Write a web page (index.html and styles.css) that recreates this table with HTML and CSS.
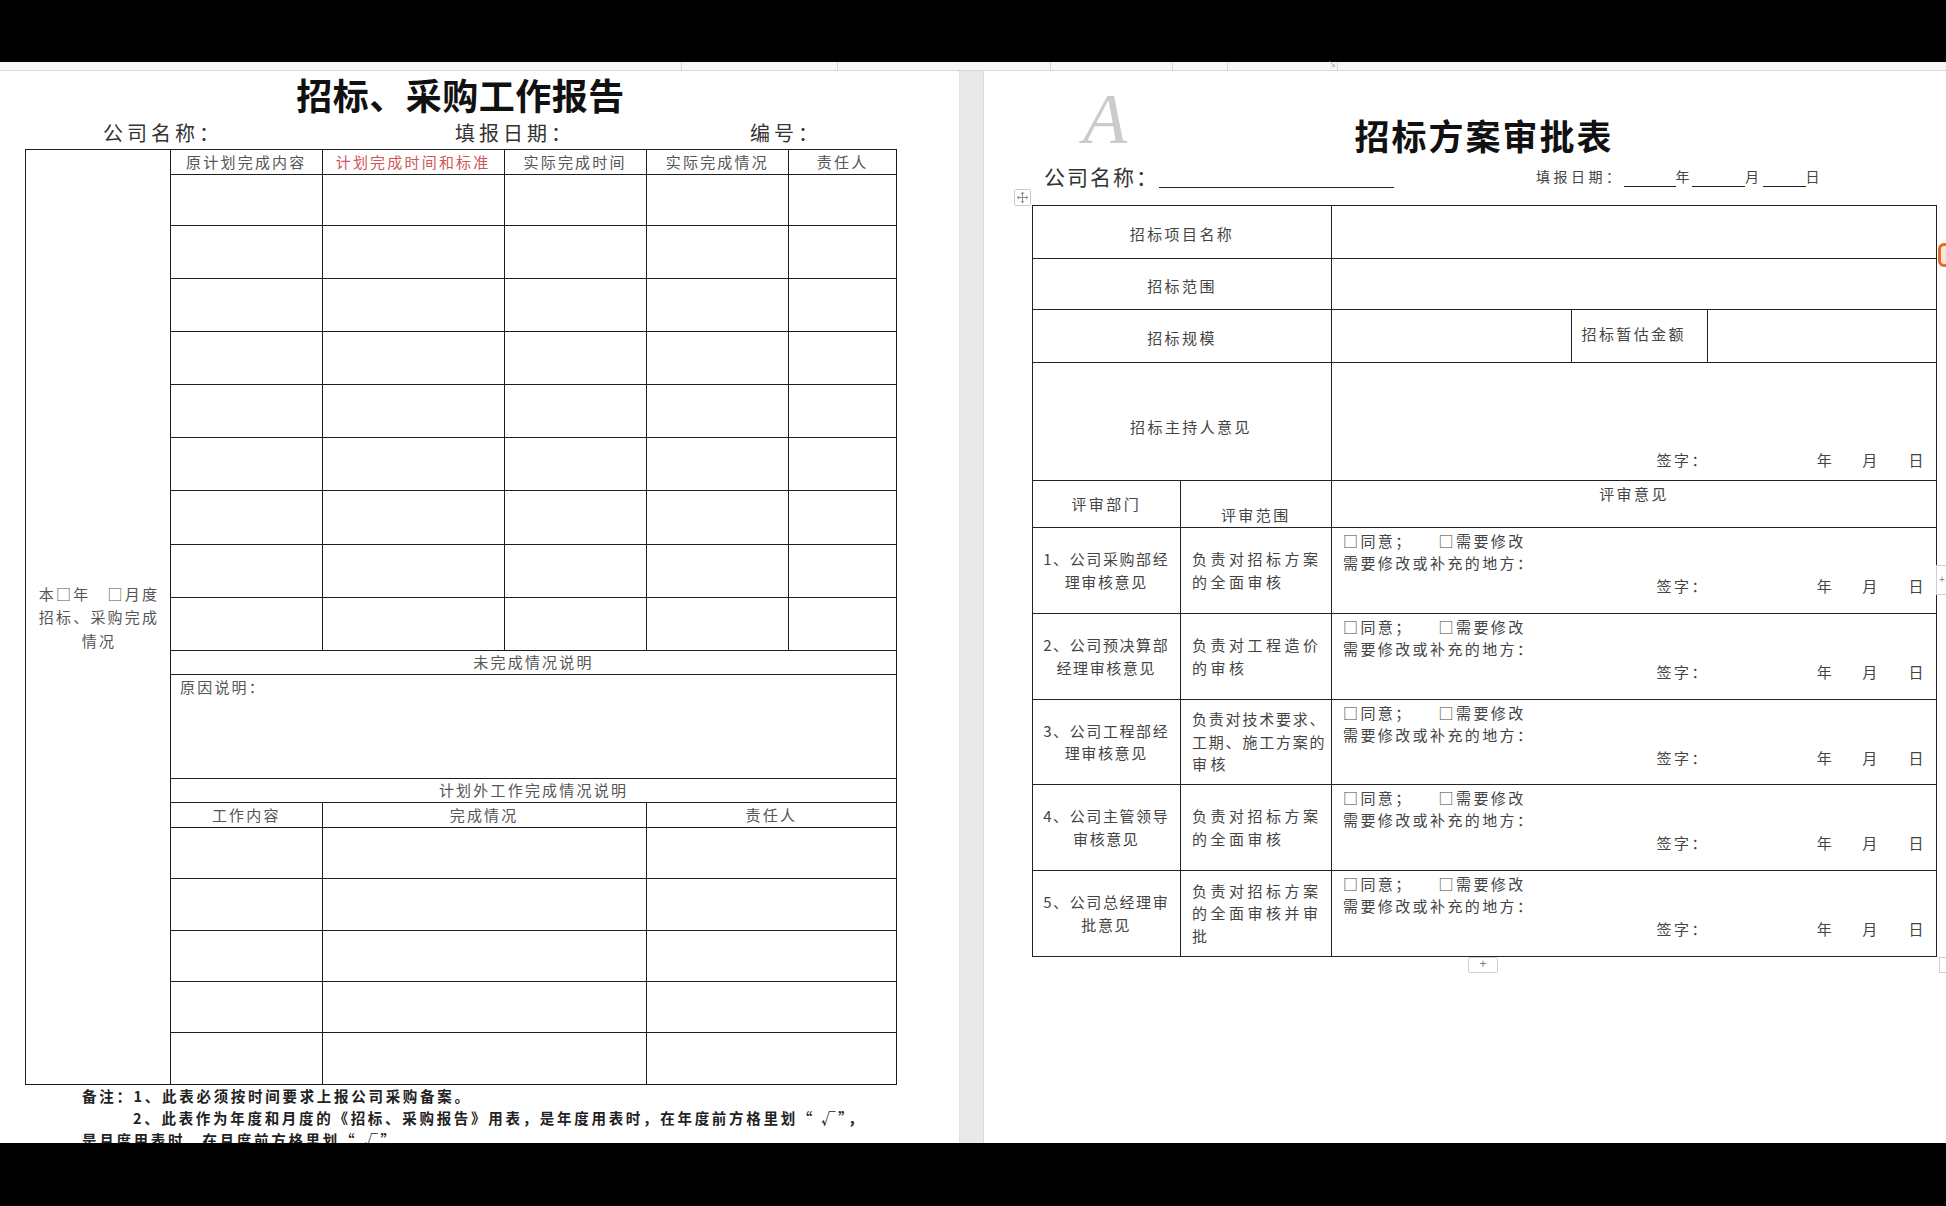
FILE: index.html
```html
<!DOCTYPE html>
<html lang="zh-CN">
<head>
<meta charset="utf-8">
<title>招标、采购工作报告 / 招标方案审批表</title>
<link rel="stylesheet" href="styles.css">
</head>
<body>
<div class="screen">
  <div class="bar-top"></div>
  <div class="ruler">
    <span class="tick k1"></span><span class="tick k2"></span><span class="tick k3"></span>
    <span class="tick k4"></span><span class="tick k5"></span><span class="tick k6"></span>
    <span class="ruler-mark">↘</span>
  </div>
  <div class="workspace">
    <section class="page page-left">
      <h1 class="doc-title">招标、采购工作报告</h1>
      <div class="meta-left">
        <span class="m1">公司名称：</span><span class="m2">填报日期：</span><span class="m3">编号：</span>
      </div>
      <table class="report">
        <colgroup>
          <col class="c0"><col class="c1"><col class="c2"><col class="c3"><col class="c4"><col class="c5">
        </colgroup>
        <tbody>
          <tr class="r-head">
            <td rowspan="19" class="side">本□年　□月度<br>招标、采购完成<br>情况</td>
            <td class="hd">原计划完成内容</td>
            <td class="hd red">计划完成时间和标准</td>
            <td class="hd">实际完成时间</td>
            <td class="hd">实际完成情况</td>
            <td class="hd">责任人</td>
          </tr>
          <tr class="r-data r-first"><td></td><td></td><td></td><td></td><td></td></tr>
          <tr class="r-data"><td></td><td></td><td></td><td></td><td></td></tr>
          <tr class="r-data"><td></td><td></td><td></td><td></td><td></td></tr>
          <tr class="r-data"><td></td><td></td><td></td><td></td><td></td></tr>
          <tr class="r-data"><td></td><td></td><td></td><td></td><td></td></tr>
          <tr class="r-data"><td></td><td></td><td></td><td></td><td></td></tr>
          <tr class="r-data"><td></td><td></td><td></td><td></td><td></td></tr>
          <tr class="r-data"><td></td><td></td><td></td><td></td><td></td></tr>
          <tr class="r-data"><td></td><td></td><td></td><td></td><td></td></tr>
          <tr class="r-sub"><td colspan="5" class="hd">未完成情况说明</td></tr>
          <tr class="r-reason"><td colspan="5" class="reason">原因说明：</td></tr>
          <tr class="r-sub"><td colspan="5" class="hd">计划外工作完成情况说明</td></tr>
          <tr class="r-sub2"><td class="hd">工作内容</td><td colspan="2" class="hd">完成情况</td><td colspan="2" class="hd">责任人</td></tr>
          <tr class="r-extra"><td></td><td colspan="2"></td><td colspan="2"></td></tr>
          <tr class="r-extra"><td></td><td colspan="2"></td><td colspan="2"></td></tr>
          <tr class="r-extra"><td></td><td colspan="2"></td><td colspan="2"></td></tr>
          <tr class="r-extra"><td></td><td colspan="2"></td><td colspan="2"></td></tr>
          <tr class="r-extra"><td></td><td colspan="2"></td><td colspan="2"></td></tr>
        </tbody>
      </table>
      <div class="notes">
        <p>备注：1、此表必须按时间要求上报公司采购备案。</p>
        <p class="indent">2、此表作为年度和月度的《招标、采购报告》用表，是年度用表时，在年度前方格里划“ √”，</p>
        <p>是月度用表时，在月度前方格里划“ √”。</p>
      </div>
    </section>
    <div class="gap"></div>
    <section class="page page-right">
      <span class="watermark">A</span>
      <h1 class="doc-title title-right">招标方案审批表</h1>
      <div class="meta-right">
        <span class="co">公司名称：</span><span class="line-long"></span>
        <span class="date">填报日期：<span class="ul u1"></span>年<span class="ul u2"></span>月<span class="ul u3"></span>日</span>
      </div>
      <div class="table-wrap">
        <span class="move-handle">
          <svg width="17" height="17" viewBox="0 0 17 17">
            <rect x="0.5" y="0.5" width="16" height="16" rx="1" fill="#fff" stroke="#c9c9c9"/>
            <path d="M8.5 4v9M4 8.5h9" stroke="#8a8a8a" stroke-width="1"/>
            <path d="M8.5 2.8l-2 2h4zM8.5 14.2l-2-2h4zM2.8 8.5l2-2v4zM14.2 8.5l-2-2v4z" fill="#8a8a8a"/>
          </svg>
        </span>
        <table class="approval">
          <colgroup>
            <col class="d0"><col class="d1"><col class="d2"><col class="d3"><col class="d4">
          </colgroup>
          <tbody>
            <tr class="a1"><td colspan="2" class="lbl">招标项目名称</td><td colspan="3"></td></tr>
            <tr class="a2"><td colspan="2" class="lbl">招标范围</td><td colspan="3"></td></tr>
            <tr class="a3"><td colspan="2" class="lbl">招标规模</td><td></td><td class="lbl-left">招标暂估金额</td><td></td></tr>
            <tr class="a4">
              <td colspan="2" class="lbl host-lbl">招标主持人意见</td>
              <td colspan="3" class="host">
                <div class="sign"><span class="sig">签字：</span><span class="y">年</span><span class="m">月</span><span>日</span></div>
              </td>
            </tr>
            <tr class="a5">
              <td class="dept-h">评审部门</td>
              <td class="scope-h">评审范围</td>
              <td colspan="3" class="op-h">评审意见</td>
            </tr>
            <tr class="rv">
              <td class="dept">1、公司采购部经<br>理审核意见</td>
              <td class="scope">负责对招标方案<br>的全面审核</td>
              <td colspan="3" class="op">
                <div><span class="opt">□同意；</span><span>□需要修改</span></div>
                <div>需要修改或补充的地方：</div>
                <div class="sign"><span class="sig">签字：</span><span class="y">年</span><span class="m">月</span><span>日</span></div>
              </td>
            </tr>
            <tr class="rv">
              <td class="dept">2、公司预决算部<br>经理审核意见</td>
              <td class="scope">负责对工程造价<br>的审核</td>
              <td colspan="3" class="op">
                <div><span class="opt">□同意；</span><span>□需要修改</span></div>
                <div>需要修改或补充的地方：</div>
                <div class="sign"><span class="sig">签字：</span><span class="y">年</span><span class="m">月</span><span>日</span></div>
              </td>
            </tr>
            <tr class="rv rv3">
              <td class="dept">3、公司工程部经<br>理审核意见</td>
              <td class="scope"><span class="tight">负责对技术要求、</span><br><span class="tight">工期、施工方案的</span><br>审核</td>
              <td colspan="3" class="op">
                <div><span class="opt">□同意；</span><span>□需要修改</span></div>
                <div>需要修改或补充的地方：</div>
                <div class="sign"><span class="sig">签字：</span><span class="y">年</span><span class="m">月</span><span>日</span></div>
              </td>
            </tr>
            <tr class="rv">
              <td class="dept">4、公司主管领导<br>审核意见</td>
              <td class="scope">负责对招标方案<br>的全面审核</td>
              <td colspan="3" class="op">
                <div><span class="opt">□同意；</span><span>□需要修改</span></div>
                <div>需要修改或补充的地方：</div>
                <div class="sign"><span class="sig">签字：</span><span class="y">年</span><span class="m">月</span><span>日</span></div>
              </td>
            </tr>
            <tr class="rv">
              <td class="dept">5、公司总经理审<br>批意见</td>
              <td class="scope">负责对招标方案<br>的全面审核并审<br>批</td>
              <td colspan="3" class="op">
                <div><span class="opt">□同意；</span><span>□需要修改</span></div>
                <div>需要修改或补充的地方：</div>
                <div class="sign"><span class="sig">签字：</span><span class="y">年</span><span class="m">月</span><span>日</span></div>
              </td>
            </tr>
          </tbody>
        </table>
        <span class="add-row">+</span>
      </div>
      <span class="edge-icon"></span>
      <span class="edge-box eb1">+</span>
      <span class="edge-box eb2"></span>
    </section>
  </div>
  <div class="bar-bottom"></div>
</div>
</body>
</html>
```

FILE: styles.css
```css
* { box-sizing: border-box; }
html, body { margin: 0; padding: 0; }
body {
  background: #000;
  width: 1946px;
  height: 1206px;
  overflow: hidden;
  font-family: "Noto Sans CJK SC", "Noto Sans", sans-serif;
}
.screen { display: flex; flex-direction: column; height: 1206px; }
.bar-top { height: 62px; flex: none; background: #000; }
.bar-bottom { flex: 1; background: #000; position: relative; z-index: 2; }

.ruler {
  height: 9px;
  flex: none;
  background: #f6f6f6;
  border-bottom: 1px solid #d8d8d8;
  position: relative;
}
.tick { position: absolute; top: 0; width: 1px; height: 8px; background: #d3d3d3; }
.k1 { left: 681px; } .k2 { left: 837px; } .k3 { left: 1050px; }
.k4 { left: 1172px; } .k5 { left: 1227px; } .k6 { left: 1337px; }
.ruler-mark { position: absolute; left: 1328px; top: -3px; font-size: 8px; color: #999; line-height: 10px; }

.workspace { display: flex; height: 1072px; flex: none; background: #fff; }
.page { background: #fff; position: relative; height: 100%; }
.page-left { width: 959px; flex: none; padding: 3px 0 0 25px; }
.gap { width: 25px; flex: none; background: #e9e9e9; border-left: 1px solid #e2e2e2; border-right: 1px solid #d9d9d9; }
.page-right { flex: 1; padding: 44px 0 0 48px; overflow: hidden; }

.doc-title {
  margin: 0;
  width: 871px;
  text-align: center;
  font-size: 36px;
  font-weight: 700;
  line-height: 40px;
  letter-spacing: 0.5px;
  color: #111;
}
.title-right { width: 904px; font-size: 35px; letter-spacing: 2px; }

/* left meta line */
.meta-left {
  display: flex;
  margin-top: 7px;
  height: 24px;
  line-height: 24px;
  padding-left: 78px;
  font-size: 20px;
  letter-spacing: 4px;
  color: #333;
  white-space: nowrap;
}
.meta-left .m1 { width: 352px; }
.meta-left .m2 { width: 295px; }

/* left report table */
.report {
  margin-top: 4px;
  width: 871px;
  border-collapse: collapse;
  table-layout: fixed;
}
.c0 { width: 145px; } .c1 { width: 151.6px; } .c2 { width: 182px; }
.c3 { width: 142px; } .c4 { width: 142.5px; } .c5 { width: 107.9px; }
.report td {
  border: 1px solid #1e1e1e;
  padding: 0;
  font-size: 15px;
  letter-spacing: 2.2px;
  line-height: 22px;
  color: #555;
  text-align: center;
  vertical-align: middle;
  white-space: nowrap;
}
.report .red { color: #cf5757; }
.report .side { line-height: 23.5px; padding-left: 2px; }
.report .reason { text-align: left; vertical-align: top; padding: 1px 0 0 9px; }
.r-head { height: 25px; }
.r-data { height: 53.1px; }
.r-first { height: 51px; }
.r-sub { height: 24px; }
.r-reason { height: 104px; }
.r-sub2 { height: 25px; }
.r-extra { height: 51.4px; }

/* notes: the last line is cut by the bottom bar, as in the source */
.notes {
  height: 58px;
  overflow: hidden;
  padding-left: 57px;
  font-size: 14.5px;
  font-weight: 700;
  letter-spacing: 2.7px;
  line-height: 22px;
  color: #222;
}
.notes p { margin: 0; white-space: nowrap; }
.notes .indent { text-indent: 51px; }

/* right page */
.watermark {
  position: absolute;
  left: 99px;
  top: 12px;
  font-family: "Liberation Serif", serif;
  font-style: italic;
  font-size: 72px;
  line-height: 1;
  color: #cbcbcb;
}
.meta-right {
  display: flex;
  align-items: flex-end;
  margin-top: 8px;
  height: 26px;
  padding-left: 12px;
  color: #333;
  white-space: nowrap;
}
.meta-right .co { font-size: 21px; letter-spacing: 2px; line-height: 26px; }
.line-long { width: 235px; height: 20px; border-bottom: 1px solid #222; margin-bottom: 1px; }
.date {
  display: flex;
  align-items: flex-end;
  margin-left: 142px;
  margin-bottom: 3px;
  font-size: 14px;
  letter-spacing: 3.5px;
  line-height: 20px;
  color: #444;
}
.ul { display: block; height: 20px; border-bottom: 1px solid #222; margin-bottom: -1px; }
.u1 { width: 52px; } .u2 { width: 53px; margin-left: -1px; } .u3 { width: 43px; }

.table-wrap { position: relative; margin-top: 16px; width: 904px; }
.move-handle { position: absolute; left: -18px; top: -16px; width: 17px; height: 17px; line-height: 0; }
.add-row {
  position: absolute;
  left: 436px;
  top: 100%;
  width: 30px;
  height: 16px;
  border: 1px solid #cfcfcf;
  border-radius: 2px;
  background: #fff;
  font-family: "Liberation Sans", sans-serif;
  font-size: 12px;
  line-height: 13px;
  text-align: center;
  color: #777;
}

.approval {
  width: 904px;
  border-collapse: collapse;
  table-layout: fixed;
}
.d0 { width: 147.5px; } .d1 { width: 151.5px; } .d2 { width: 239.5px; }
.d3 { width: 136.5px; } .d4 { width: 229px; }
.approval td {
  border: 1px solid #222;
  padding: 0;
  font-size: 15px;
  letter-spacing: 2.4px;
  line-height: 22.5px;
  color: #444;
  vertical-align: middle;
  white-space: nowrap;
}
.a1 { height: 53px; } .a2 { height: 51px; } .a3 { height: 53px; }
.a4 { height: 118px; } .a5 { height: 47px; }
.rv { height: 86px; }
.rv3 { height: 85px; }

.approval .lbl { text-align: center; padding-top: 5px; }
.approval .host-lbl { padding-top: 11px; padding-left: 18px; }
.approval .lbl-left { padding: 0 0 4px 10px; }
.approval .host { vertical-align: bottom; padding: 0 10px 9px 0; }
.approval .dept-h { text-align: center; }
.approval .scope-h { text-align: center; vertical-align: bottom; padding-bottom: 1px; }
.approval .op-h { text-align: center; vertical-align: top; padding-top: 2px; }
.approval .dept { text-align: center; letter-spacing: 1.6px; }
.approval .scope { text-align: left; padding-left: 11.5px; letter-spacing: 3.5px; }
.approval .scope .tight { letter-spacing: 1.8px; }
.approval .op { vertical-align: top; padding: 1.5px 10px 0 11px; }
.opt { margin-right: 26px; }
.sign { display: flex; justify-content: flex-end; }
.sign .sig { margin-right: 108px; }
.sign .y { margin-right: 28px; }
.sign .m { margin-right: 29px; }

/* right-edge UI bits */
.edge-icon {
  position: absolute;
  left: 954px;
  top: 172px;
  width: 16px;
  height: 24px;
  border: 3px solid #e8692c;
  border-radius: 6px;
  background: #fbe3d6;
}
.edge-box {
  position: absolute;
  left: 952px;
  width: 14px;
  border: 1px solid #cfcfcf;
  background: #fff;
  color: #888;
  font-family: "Liberation Sans", sans-serif;
  font-size: 10px;
  text-align: left;
  padding-left: 2px;
}
.eb1 { top: 494px; height: 30px; line-height: 28px; }
.eb2 { top: 886px; height: 16px; left: 955px; }
```
